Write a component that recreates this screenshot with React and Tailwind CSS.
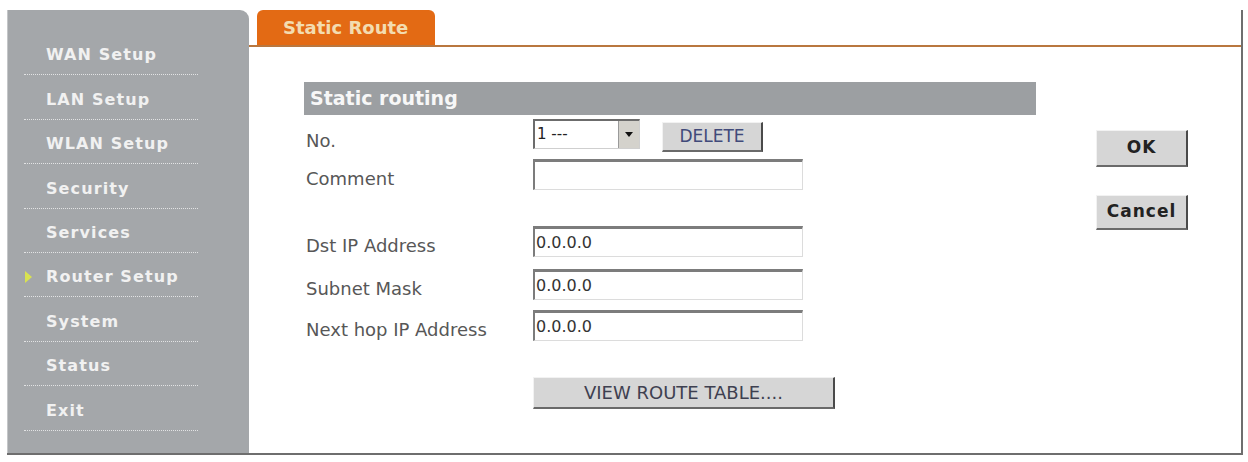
import React from 'react';

const menu = [
  'WAN Setup',
  'LAN Setup',
  'WLAN Setup',
  'Security',
  'Services',
  'Router Setup',
  'System',
  'Status',
  'Exit',
];

const ACTIVE = 'Router Setup';

function SideMenu() {
  return (
    <div className="w-[242px] shrink-0 bg-[#a4a7aa] rounded-tr-[9px] border-l border-[#c4c6c8] pt-[21px]">
      {menu.map((item) => (
        <div
          key={item}
          className="relative h-[44.4px] ml-[16px] w-[174px] flex items-end pb-[9px] border-b border-dotted border-[#e2e3e4]"
        >
          {item === ACTIVE && (
            <span className="absolute left-[1px] top-[18px] w-0 h-0 border-y-[6px] border-y-transparent border-l-[7px] border-l-[#d9e250]" />
          )}
          <span className="ml-[22px] text-[16px] leading-[20px] font-bold tracking-[1.1px] text-[#f1f1f1]">
            {item}
          </span>
        </div>
      ))}
    </div>
  );
}

// sunken text box, old-style 3D border
function TextBox({ value = '' }) {
  return (
    <div className="w-[270px] h-[31px] bg-white border-t-[3px] border-l-2 border-r border-b border-t-[#7c7c7c] border-l-[#7c7c7c] border-r-[#dcdcdc] border-b-[#dcdcdc] flex items-center pl-[1px]">
      <span className="text-[16px] text-[#333]">{value}</span>
    </div>
  );
}

// label column is fixed, the label sits a little below the field's middle
function Row({ label, children, className = 'h-[31px]', labelPad = 'pt-[6px]' }) {
  return (
    <div className={`flex items-start ${className}`}>
      <div className={`w-[229px] pl-[2px] ${labelPad} text-[18px] leading-[27px] text-[#575757]`}>{label}</div>
      {children}
    </div>
  );
}

function Button({ children, className = '' }) {
  return (
    <button
      className={`bg-[#d6d6d6] border-t border-l border-t-[#f2f2f2] border-l-[#f2f2f2] border-r-2 border-b-2 border-r-[#4a4a4a] border-b-[#6a6a6a] flex items-center justify-center ${className}`}
    >
      {children}
    </button>
  );
}

export default function App() {
  return (
    <div className="w-[1248px] h-[462px] bg-white pt-[10px] pl-[7px] font-['DejaVu_Sans',sans-serif]">
      <div className="w-[1236px] h-[445px] flex border-r-2 border-b-2 border-[#6e6e6e]">
        <SideMenu />

        <div className="flex-1 flex flex-col">
          {/* tab strip */}
          <div className="h-[37px] pl-[8px] flex items-end border-b-2 border-[#b9773f]">
            <div className="w-[178px] h-[35px] bg-[#e36a14] rounded-t-[6px] flex items-center pl-[26px] text-[18px] font-bold text-[#f3dcb0]">
              Static Route
            </div>
          </div>

          <div className="flex">
            {/* form */}
            <div className="ml-[55px] mt-[35px] w-[732px] flex flex-col">
              <div className="h-[33px] bg-[#9c9fa2] flex items-center pl-[6px] text-[19px] font-bold text-[#f7f7f7]">
                Static routing
              </div>

              <Row label="No." className="mt-[4px] h-[33px]" labelPad="pt-[8px]">
                <div className="flex items-start">
                  <div className="w-[107px] h-[30px] bg-white border-t-2 border-l-2 border-r border-b border-t-[#6c6c6c] border-l-[#6c6c6c] border-r-[#cfcfcf] border-b-[#cfcfcf] flex">
                    <span className="flex-1 pl-[2px] text-[15px] leading-[26px] text-[#222]">1 ---</span>
                    <span className="w-[21px] h-full bg-[#d4d2cc] border-l border-[#9a9a9a] flex items-center justify-center">
                      <span className="w-0 h-0 border-x-[4px] border-x-transparent border-t-[5px] border-t-[#111]" />
                    </span>
                  </div>
                  <Button className="ml-[22px] mt-[3px] w-[101px] h-[30px] text-[17px] text-[#414a7a]">
                    DELETE
                  </Button>
                </div>
              </Row>

              <Row label="Comment" className="mt-[7px] h-[31px]">
                <TextBox />
              </Row>

              <Row label="Dst IP Address" className="mt-[36px] h-[31px]">
                <TextBox value="0.0.0.0" />
              </Row>

              <Row label="Subnet Mask" className="mt-[12px] h-[31px]">
                <TextBox value="0.0.0.0" />
              </Row>

              <Row label="Next hop IP Address" className="mt-[10px] h-[31px]">
                <TextBox value="0.0.0.0" />
              </Row>

              <div className="mt-[36px] pl-[229px]">
                <Button className="w-[302px] h-[32px] text-[18px] text-[#3e4050]">
                  VIEW ROUTE TABLE....
                </Button>
              </div>
            </div>

            {/* actions */}
            <div className="ml-[60px] mt-[83px] flex flex-col">
              <Button className="w-[92px] h-[37px] text-[17px] font-bold tracking-[1px] text-[#222]">
                OK
              </Button>
              <Button className="mt-[28px] w-[92px] h-[35px] text-[17px] font-bold tracking-[1px] text-[#222]">
                Cancel
              </Button>
            </div>
          </div>
        </div>
      </div>
    </div>
  );
}
